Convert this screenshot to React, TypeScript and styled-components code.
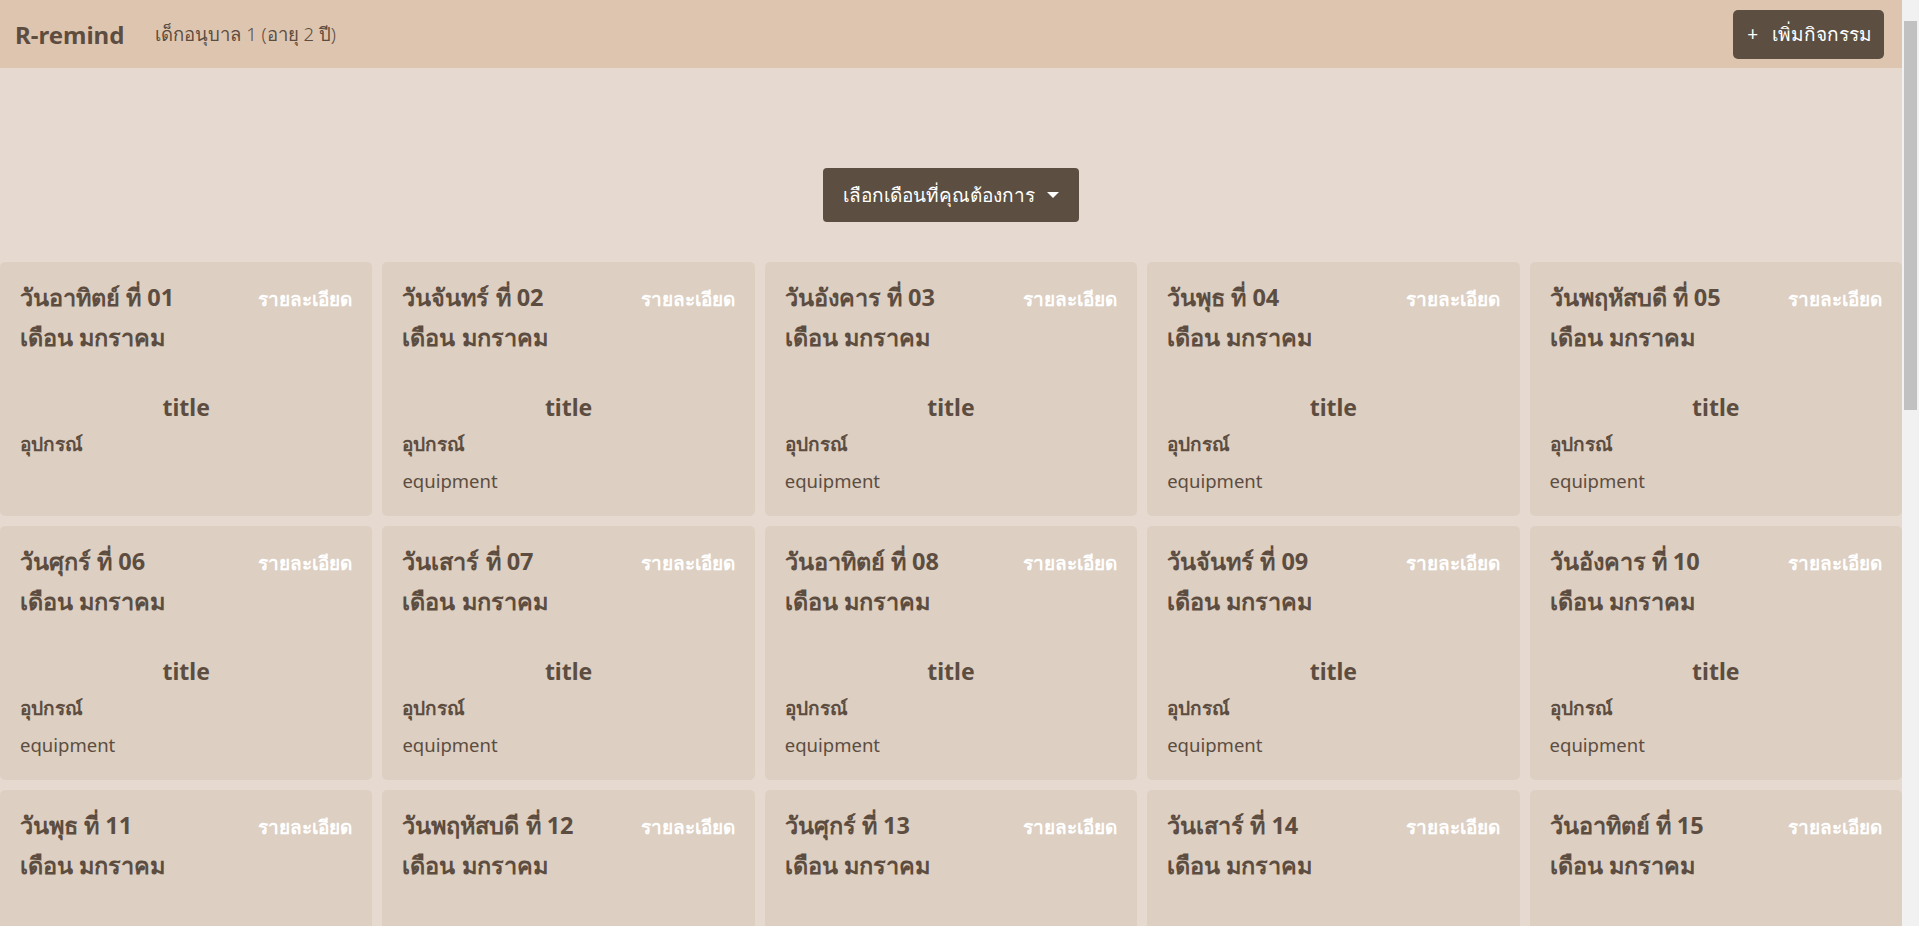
import React from "react";
import styled, { createGlobalStyle } from "styled-components";

const GlobalStyle = createGlobalStyle`
  html, body {
    margin: 0;
    padding: 0;
  }
  body {
    padding-right: 17px;
    background:
      linear-gradient(#c1c1c1, #c1c1c1) right 2px top 21px / 13px 389px no-repeat fixed,
      #f1f1f1;
    font-family: "Noto Sans", "Open Sans", sans-serif;
    color: #5c4d40;
  }
  * {
    box-sizing: border-box;
  }
`;

const DAYS = ["อาทิตย์", "จันทร์", "อังคาร", "พุธ", "พฤหัสบดี", "ศุกร์", "เสาร์"];

interface DayItem {
  day: number;
  name: string;
  title: string;
  equipment: string;
}

const items: DayItem[] = Array.from({ length: 31 }, (_, i) => ({
  day: i + 1,
  name: DAYS[i % 7],
  title: "title",
  equipment: i === 0 ? "" : "equipment",
}));

const App = () => {
  return (
    <Page>
      <GlobalStyle />
      <Header>
        <Brand>
          <Logo>R-remind</Logo>
          <ClassName>เด็กอนุบาล 1 (อายุ 2 ปี)</ClassName>
        </Brand>
        <AddButton type="button">
          <span>+</span>
          <span>เพิ่มกิจกรรม</span>
        </AddButton>
      </Header>
      <Toolbar>
        <MonthSelect type="button">
          เลือกเดือนที่คุณต้องการ
          <Caret />
        </MonthSelect>
      </Toolbar>
      <Grid>
        {items.map((item) => (
          <Card key={item.day}>
            <CardTop>
              <DayTitle>
                วัน{item.name} ที่ {String(item.day).padStart(2, "0")}
              </DayTitle>
              <Detail href="#">รายละเอียด</Detail>
            </CardTop>
            <DayTitle>เดือน มกราคม</DayTitle>
            <ActivityTitle>{item.title}</ActivityTitle>
            <Label>อุปกรณ์</Label>
            <Equipment>{item.equipment}</Equipment>
          </Card>
        ))}
      </Grid>
    </Page>
  );
};

const Page = styled.div`
  min-height: 100vh;
  background: #e6d9cf;
`;

const Header = styled.header`
  height: 68px;
  background: #dec5b0;
  display: flex;
  align-items: center;
  justify-content: space-between;
  padding: 0 18px 0 15px;
`;

const Brand = styled.div`
  display: flex;
  align-items: center;
  gap: 31px;
`;

const Logo = styled.span`
  font-size: 24px;
  font-weight: 700;
  color: #5c4d40;
`;

const ClassName = styled.span`
  font-size: 18.5px;
  font-weight: 300;
  color: #5c4d40;
`;

const AddButton = styled.button`
  height: 49px;
  padding: 0 12px 0 14px;
  border: none;
  border-radius: 5px;
  background: #5c4f42;
  color: #ffffff;
  font-family: inherit;
  font-size: 19px;
  display: flex;
  align-items: center;
  gap: 14px;
  cursor: pointer;
`;

const Toolbar = styled.div`
  display: flex;
  justify-content: center;
  padding: 100px 0 40px;
`;

const MonthSelect = styled.button`
  height: 54px;
  padding: 0 20px;
  border: none;
  border-radius: 4px;
  background: #5c4f42;
  color: #ffffff;
  font-family: inherit;
  font-size: 19px;
  display: flex;
  align-items: center;
  gap: 12px;
  cursor: pointer;
`;

const Caret = styled.span`
  width: 0;
  height: 0;
  border-left: 6px solid transparent;
  border-right: 6px solid transparent;
  border-top: 6px solid #ffffff;
`;

const Grid = styled.main`
  display: grid;
  grid-template-columns: repeat(5, 1fr);
  gap: 10px;
  padding-bottom: 24px;
`;

const Card = styled.section`
  height: 254px;
  background: #ddcfc2;
  border-radius: 5px;
  padding: 15px 20px 0 20px;
  display: flex;
  flex-direction: column;
`;

const CardTop = styled.div`
  display: flex;
  justify-content: space-between;
  align-items: baseline;
`;

const DayTitle = styled.div`
  font-size: 23.5px;
  font-weight: 700;
  line-height: 40px;
  color: #5c4d40;
`;

const Detail = styled.a`
  font-size: 19px;
  font-weight: 700;
  color: #ffffff;
  text-decoration: none;
`;

const ActivityTitle = styled.div`
  margin-top: 32px;
  text-align: center;
  font-size: 23px;
  font-weight: 700;
  line-height: 36px;
`;

const Label = styled.div`
  margin-top: 3px;
  font-size: 19px;
  font-weight: 700;
  line-height: 32px;
`;

const Equipment = styled.div`
  margin-top: 2px;
  font-size: 18.5px;
  line-height: 38px;
`;

export default App;
